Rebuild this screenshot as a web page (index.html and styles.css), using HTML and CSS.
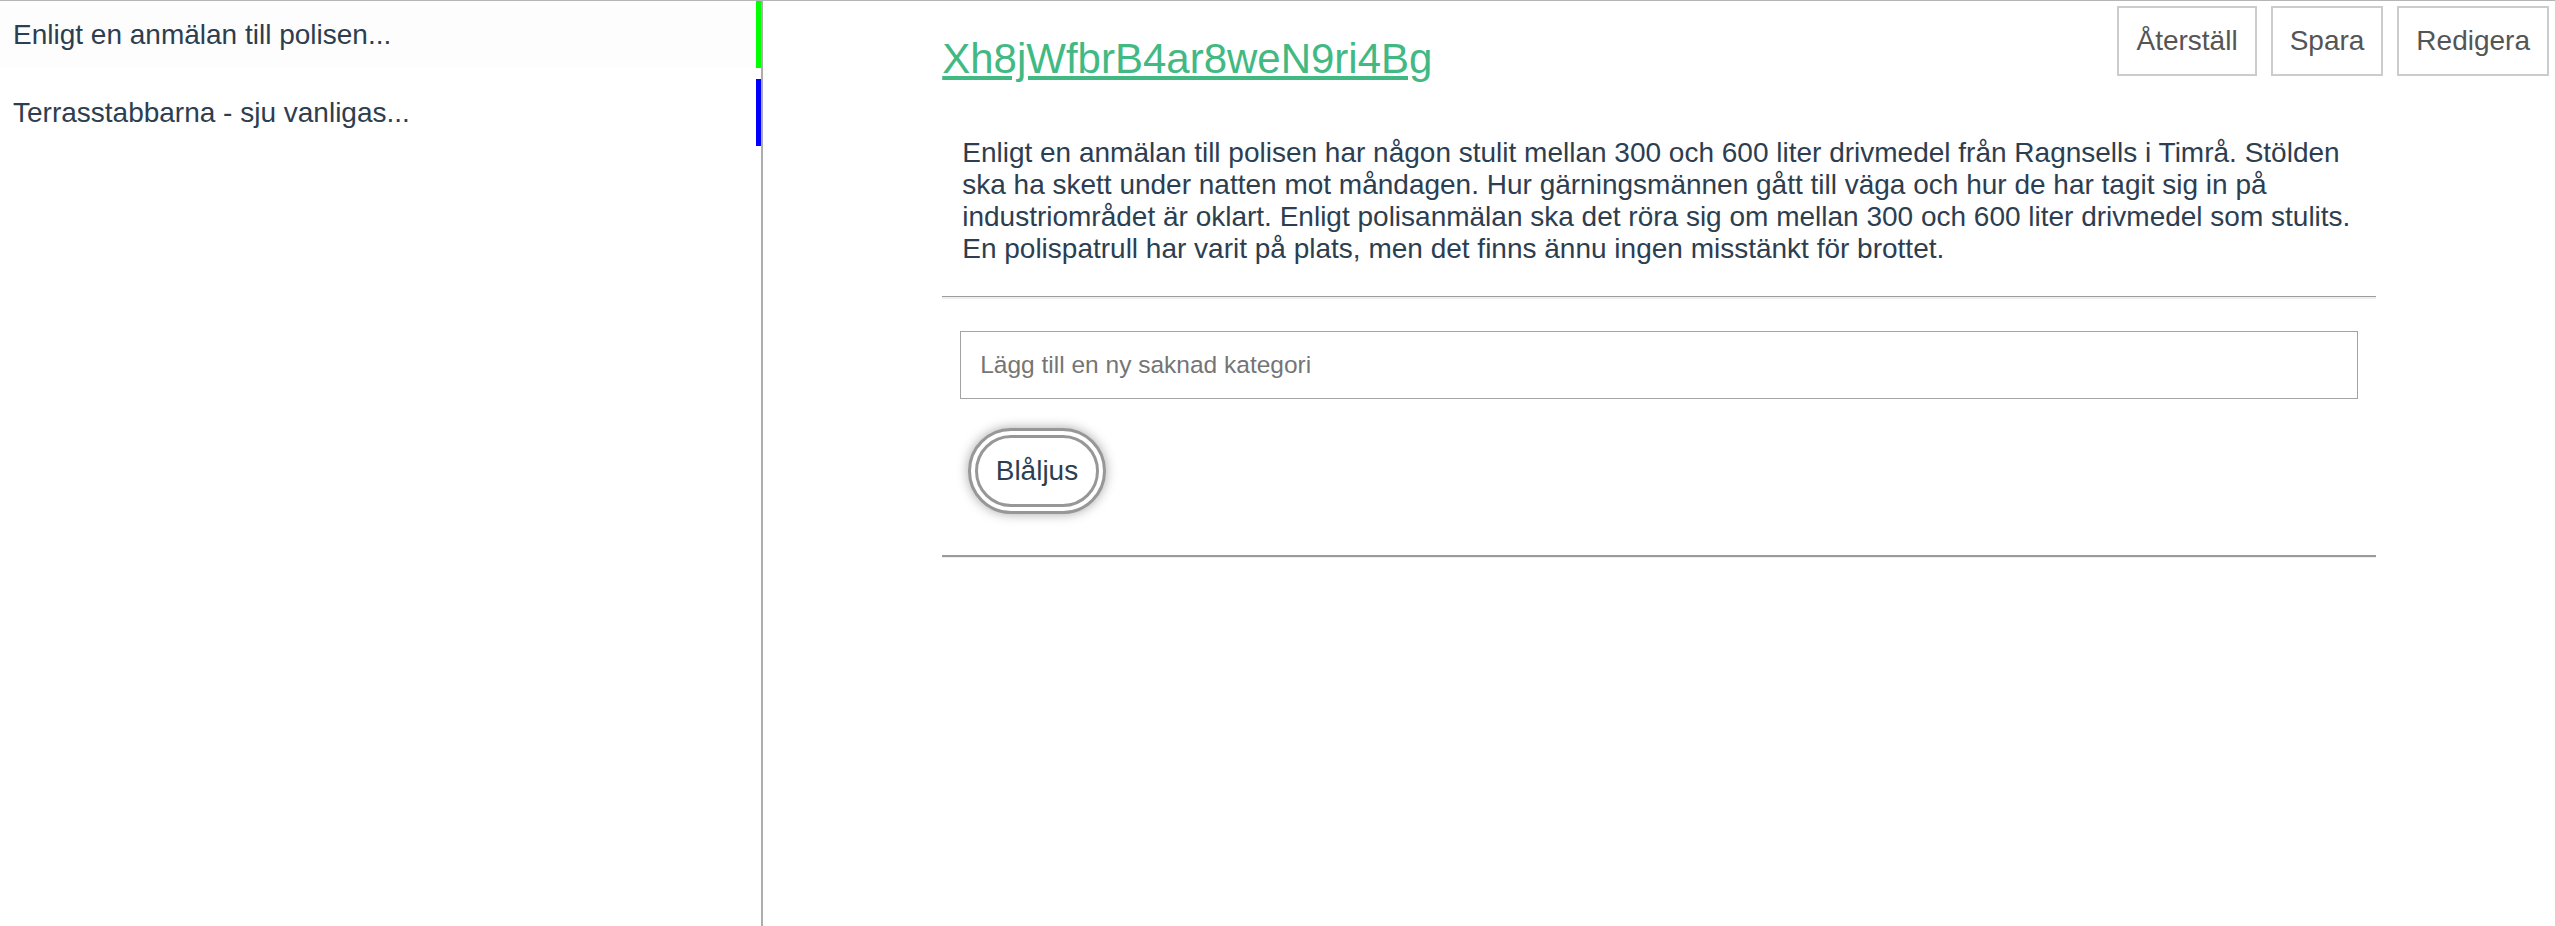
FILE: index.html
```html
<!DOCTYPE html>
<html lang="sv">
<head>
<meta charset="utf-8">
<title>Artiklar</title>
<link rel="stylesheet" href="styles.css">
</head>
<body>
<div class="app">
  <aside class="sidebar">
    <div class="item item-active">Enligt en anmälan till polisen...</div>
    <div class="item item-blue">Terrasstabbarna - sju vanligas...</div>
  </aside>
  <main class="main">
    <div class="toolbar">
      <button class="btn">Återställ</button>
      <button class="btn">Spara</button>
      <button class="btn">Redigera</button>
    </div>
    <div class="content">
      <div class="title"><a href="#" class="title-link">Xh8jWfbrB4ar8weN9ri4Bg</a></div>
      <p class="body-text">Enligt en anmälan till polisen har någon stulit mellan 300 och 600 liter drivmedel från Ragnsells i Timrå. Stölden ska ha skett under natten mot måndagen. Hur gärningsmännen gått till väga och hur de har tagit sig in på industriområdet är oklart. Enligt polisanmälan ska det röra sig om mellan 300 och 600 liter drivmedel som stulits. En polispatrull har varit på plats, men det finns ännu ingen misstänkt för brottet.</p>
      <hr class="rule rule-top">
      <div class="categories">
        <input class="cat-input" type="text" placeholder="Lägg till en ny saknad kategori">
        <div class="chips">
          <span class="chip">Blåljus</span>
        </div>
      </div>
      <hr class="rule rule-bottom">
    </div>
  </main>
</div>
</body>
</html>
```

FILE: styles.css
```css
html, body {
  margin: 0;
  padding: 0;
  background: #ffffff;
}

body {
  font-family: "Liberation Sans", Arial, Helvetica, sans-serif;
  color: #2c3e50;
  font-size: 28px;
}

.app {
  display: flex;
  height: 926px;
  border-top: 1px solid #b5b5b5;
  box-sizing: border-box;
}

.sidebar {
  width: 761px;
  flex: 0 0 761px;
  border-right: 2px solid #adadad;
  display: flex;
  flex-direction: column;
  gap: 11px;
}

.item {
  padding: 17.5px 13px;
  font-size: 28px;
  line-height: normal;
  border-right: 5px solid transparent;
  white-space: nowrap;
}

.item-active {
  background: #fdfdfd;
  border-right-color: #00ff00;
}

.item-blue {
  border-right-color: #0000ff;
}

.main {
  flex: 1 1 auto;
  min-width: 0;
}

.toolbar {
  float: right;
  display: flex;
  gap: 14px;
  margin: 5px 6px 0 0;
}

.btn {
  font-family: "Liberation Sans", Arial, Helvetica, sans-serif;
  font-size: 28px;
  line-height: normal;
  color: #555555;
  background: #ffffff;
  border: 2px solid #cccccc;
  padding: 17px 17px;
  margin: 0;
  border-radius: 0;
}

.content {
  width: 80%;
  margin: 0 auto;
}

.title {
  margin-top: 34px;
  font-size: 42px;
  line-height: normal;
}

.title-link {
  color: #42b983;
  text-decoration: underline;
}

.body-text {
  margin: 54px 0 0;
  padding: 0 20px;
  font-size: 28px;
  line-height: normal;
}

.rule {
  height: 0;
  margin: 0;
  border: 0;
}

.rule-top {
  margin-top: 31px;
  border-top: 1px solid #9c9c9c;
  border-bottom: 2px solid #eeeeee;
}

.rule-bottom {
  border-top: 2px solid #9a9a9a;
  border-bottom: 1px solid #eeeeee;
}

.categories {
  padding: 32px 18px 41px;
}

.cat-input {
  display: block;
  width: 100%;
  height: 68px;
  box-sizing: border-box;
  border: 1px solid #a3a3a3;
  padding: 0 19px;
  font-family: "Liberation Sans", Arial, Helvetica, sans-serif;
  font-size: 24.5px;
  color: #2c3e50;
  outline: none;
  border-radius: 0;
}

.cat-input::placeholder {
  color: #757575;
}

.chips {
  display: flex;
  gap: 14px;
  margin-top: 29px;
  padding-left: 8px;
}

.chip {
  display: inline-block;
  font-size: 28px;
  line-height: normal;
  padding: 17px 17.5px;
  border: 10px double #979797;
  border-radius: 50px;
  background: #ffffff;
  box-shadow: 0 0 12px rgba(0, 0, 0, 0.35);
}
```
